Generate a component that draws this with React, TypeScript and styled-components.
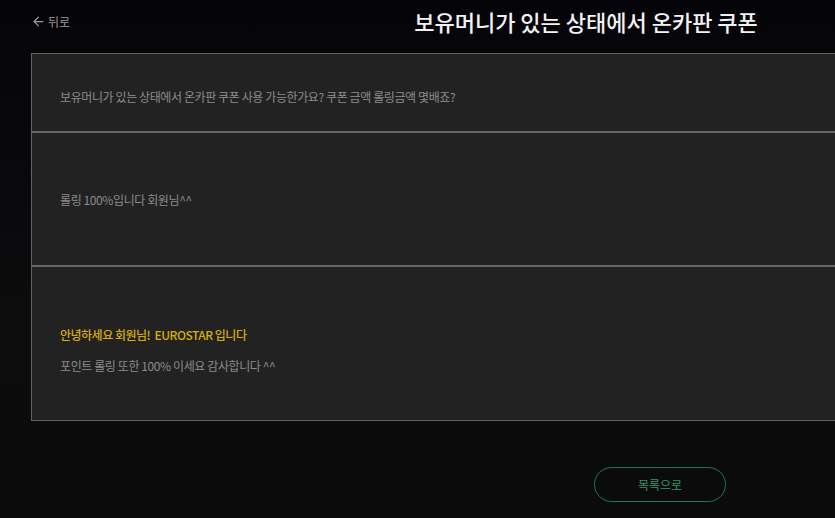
import styled, {createGlobalStyle} from "styled-components";
import {ArrowLeft} from "lucide-react";

const GlobalStyle = createGlobalStyle`
  html, body {
    margin: 0;
    padding: 0;
    overflow: hidden;
    background: #07060a;
  }
  body {
    font-family: "Noto Sans CJK KR", "Noto Sans", sans-serif;
  }
`;

const Page = styled.div`
  min-height: 518px;
  width: 835px;
  overflow: hidden;
  background: linear-gradient(#050409 0%, #0c0c0d 60%, #0b0b0b 100%);
  padding-left: 31px;
  box-sizing: border-box;
`;

const Inner = styled.div`
  width: 1110px;
`;

const Header = styled.div`
  display: grid;
  grid-template-columns: 1fr auto 1fr;
  align-items: center;
  height: 42px;
  margin-bottom: 11px;
`;

const Back = styled.a`
  display: flex;
  align-items: center;
  gap: 2px;
  font-size: 12px;
  color: #9a9a9a;
  cursor: pointer;
`;

const Title = styled.h1`
  margin: 0;
  font-size: 22px;
  font-weight: 500;
  color: #f2f2f2;
`;

const Panel = styled.div`
  border: 1px solid #626262;
  background: #222223;
`;

const Row = styled.div<{$pad: string}>`
  padding: ${(p) => p.$pad};
  padding-left: 28px;
  & + & {
    border-top: 2px solid #666;
  }
`;

const Text = styled.p<{$accent?: boolean}>`
  margin: 0;
  font-size: 12px;
  line-height: 16px;
  color: ${(p) => (p.$accent ? "#d7ad0c" : "#8c8c8c")};
  font-weight: ${(p) => (p.$accent ? 500 : 400)};
  letter-spacing: ${(p) => (p.$accent ? "-0.5px" : "-0.4px")};
`;

const Answer = styled.div`
  display: flex;
  flex-direction: column;
  gap: 15px;
`;

const Footer = styled.div`
  display: flex;
  padding: 46px 0 0 563px;
`;

const ListButton = styled.button`
  width: 132px;
  height: 35px;
  border: 1px solid #1d7657;
  border-radius: 18px;
  background: transparent;
  color: #2a9a72;
  font-family: inherit;
  font-size: 12px;
  cursor: pointer;
`;

export default function App() {
  return (
    <>
      <GlobalStyle />
      <Page>
        <Inner>
          <Header>
            <Back>
              <ArrowLeft size={15} strokeWidth={2} />
              뒤로
            </Back>
            <Title>보유머니가 있는 상태에서 온카판 쿠폰</Title>
            <div />
          </Header>
          <Panel>
            <Row $pad="35px 0 26px">
              <Text>보유머니가 있는 상태에서 온카판 쿠폰 사용 가능한가요? 쿠폰 금액 롤링금액 몇배죠?</Text>
            </Row>
            <Row $pad="59px 0 57px">
              <Text>롤링 100%입니다 회원님^^</Text>
            </Row>
            <Row $pad="60px 0 46px">
              <Answer>
                <Text $accent>안녕하세요 회원님!&nbsp; EUROSTAR 입니다</Text>
                <Text>포인트 롤링 또한 100% 이세요 감사합니다 ^^</Text>
              </Answer>
            </Row>
          </Panel>
          <Footer>
            <ListButton>목록으로</ListButton>
          </Footer>
        </Inner>
      </Page>
    </>
  );
}
